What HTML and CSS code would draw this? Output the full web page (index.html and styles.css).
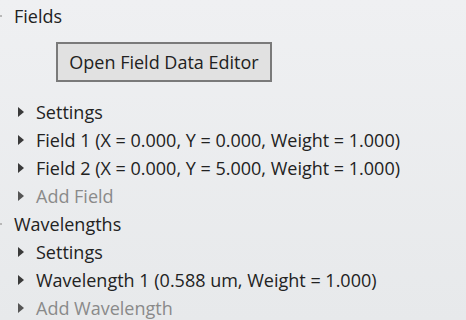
FILE: index.html
```html
<!DOCTYPE html>
<html>
<head>
<meta charset="utf-8">
<link rel="stylesheet" href="styles.css">
</head>
<body>
<div class="panel">
  <div class="row top"><span class="dot"></span><span class="label">Fields</span></div>
  <div class="btnwrap"><button class="btn">Open Field Data Editor</button></div>
  <div class="row child"><span class="tri"></span><span class="label">Settings</span></div>
  <div class="row child"><span class="tri"></span><span class="label">Field 1 (X = 0.000, Y = 0.000, Weight = 1.000)</span></div>
  <div class="row child"><span class="tri"></span><span class="label">Field 2 (X = 0.000, Y = 5.000, Weight = 1.000)</span></div>
  <div class="row child muted"><span class="tri"></span><span class="label">Add Field</span></div>
  <div class="row top"><span class="dot"></span><span class="label">Wavelengths</span></div>
  <div class="row child"><span class="tri"></span><span class="label">Settings</span></div>
  <div class="row child"><span class="tri"></span><span class="label">Wavelength 1 (0.588 um, Weight = 1.000)</span></div>
  <div class="row child muted"><span class="tri"></span><span class="label">Add Wavelength</span></div>
</div>
</body>
</html>
```
FILE: styles.css
```css
html, body {
  margin: 0;
  padding: 0;
}
body {
  width: 466px;
  height: 320px;
  overflow: hidden;
  background: linear-gradient(#eff0f2, #e7e9eb);
  font-family: "Open Sans", "Noto Sans", sans-serif;
  font-size: 18px;
  color: #222;
}
.panel {
  padding-top: 2px;
}
.row {
  height: 28px;
  display: flex;
  align-items: center;
  white-space: nowrap;
}
.top .label {
  margin-left: 12px;
}
.dot {
  width: 2px;
  height: 2px;
  background: #b8b8b8;
}
.child {
  padding-left: 18px;
}
.tri {
  width: 0;
  height: 0;
  border-top: 5px solid transparent;
  border-bottom: 5px solid transparent;
  border-left: 6px solid #3a3a3a;
}
.child .label {
  margin-left: 12px;
}
.muted {
  color: #8a8a8a;
}
.muted .tri {
  border-left-color: #555;
}
.btnwrap {
  height: 68px;
  padding-left: 56px;
  padding-top: 12px;
  box-sizing: border-box;
}
.btn {
  width: 216px;
  height: 40px;
  border: 2px solid #7a7a7a;
  background: #e1e1e1;
  font-family: "Open Sans", "Noto Sans", sans-serif;
  font-size: 18px;
  color: #222;
  padding: 0;
  margin: 0;
}
```
